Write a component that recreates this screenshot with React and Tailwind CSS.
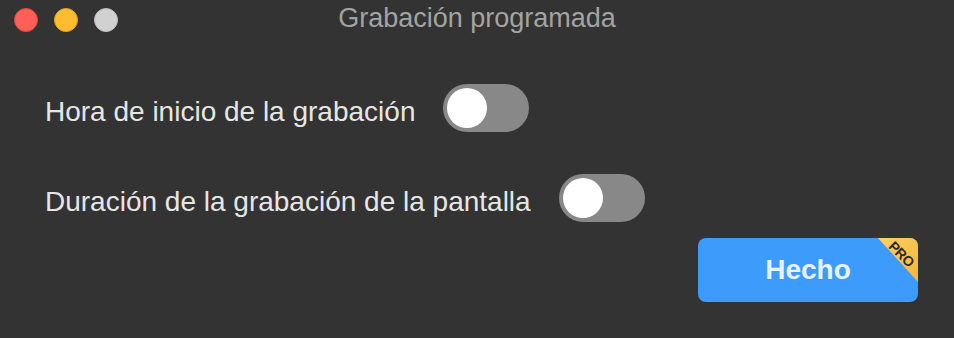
import { useState } from "react";

const font = { fontFamily: '"Liberation Sans", Arial, sans-serif' };

function Toggle({ on, onChange }) {
  return (
    <button
      onClick={() => onChange(!on)}
      className={`w-[86px] h-[48px] rounded-full p-1 flex shrink-0 ${
        on ? "bg-[#3d9bfb] justify-end" : "bg-[#888888] justify-start"
      }`}
    >
      <span className="w-10 h-10 rounded-full bg-white block" />
    </button>
  );
}

function SettingRow({ label, on, onChange }) {
  return (
    <div className="flex items-center gap-7 h-[48px]">
      <span className="pt-2 text-[28px] text-[#e6e6e6] whitespace-nowrap">{label}</span>
      <Toggle on={on} onChange={onChange} />
    </div>
  );
}

export default function App() {
  const [startTime, setStartTime] = useState(false);
  const [duration, setDuration] = useState(false);

  return (
    <div className="w-[954px] h-[338px] bg-[#333333] overflow-hidden" style={font}>
      {/* title bar */}
      <div className="grid grid-cols-[1fr_auto_1fr] items-center h-10">
        <div className="flex items-center gap-4 pl-[14px]">
          <span className="w-6 h-6 rounded-full bg-[#fe5f57] border border-[#e2463f]" />
          <span className="w-6 h-6 rounded-full bg-[#febc2e] border border-[#e0a123]" />
          <span className="w-6 h-6 rounded-full bg-[#d1d1d1] border border-[#bdbdbd]" />
        </div>
        <div className="text-[27px] text-[#a3a3a3] -mt-1">Grabación programada</div>
        <div />
      </div>

      {/* settings */}
      <div className="pl-[45px] pt-[44px] flex flex-col gap-[42px]">
        <SettingRow label="Hora de inicio de la grabación" on={startTime} onChange={setStartTime} />
        <SettingRow label="Duración de la grabación de la pantalla" on={duration} onChange={setDuration} />
      </div>

      <div className="flex justify-end pr-9 mt-4">
        <button className="relative w-[220px] h-16 rounded-lg bg-[#3d9bfb] overflow-hidden flex items-center justify-center">
          <span className="text-[28px] font-bold text-[#e8f2fe]">Hecho</span>
          <svg className="absolute top-0 right-0" width="40" height="44" viewBox="0 0 40 44">
            <defs>
              <linearGradient id="pro" x1="0" y1="0" x2="1" y2="1">
                <stop offset="0" stopColor="#ffd266" />
                <stop offset="1" stopColor="#f6b43a" />
              </linearGradient>
            </defs>
            <polygon points="0,0 40,0 40,44" fill="url(#pro)" />
          </svg>
          <span className="absolute top-[9px] right-[2px] rotate-45 text-[14px] font-semibold leading-none text-[#2b2b2b] tracking-tight">
            PRO
          </span>
        </button>
      </div>
    </div>
  );
}
